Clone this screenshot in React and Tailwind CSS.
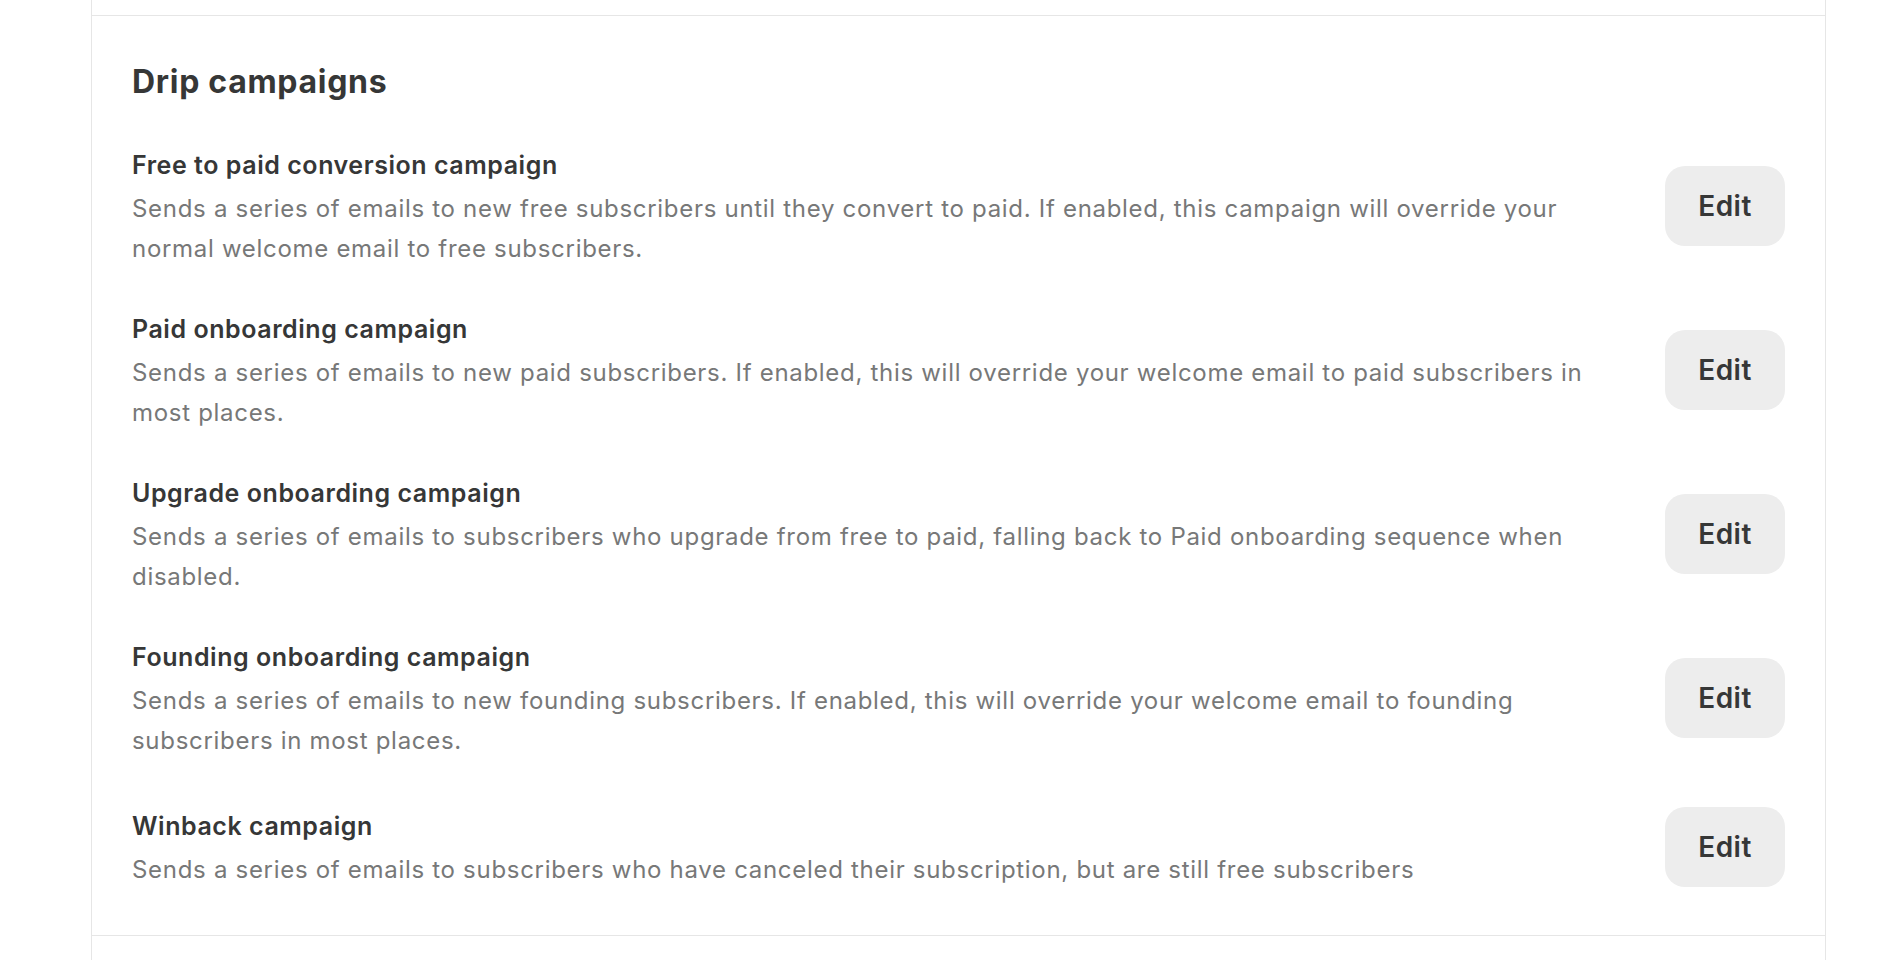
import React from 'react';

const campaigns = [
  {
    title: 'Free to paid conversion campaign',
    body: 'Sends a series of emails to new free subscribers until they convert to paid. If enabled, this campaign will override your normal welcome email to free subscribers.',
  },
  {
    title: 'Paid onboarding campaign',
    body: 'Sends a series of emails to new paid subscribers. If enabled, this will override your welcome email to paid subscribers in most places.',
  },
  {
    title: 'Upgrade onboarding campaign',
    body: 'Sends a series of emails to subscribers who upgrade from free to paid, falling back to Paid onboarding sequence when disabled.',
  },
  {
    title: 'Founding onboarding campaign',
    body: 'Sends a series of emails to new founding subscribers. If enabled, this will override your welcome email to founding subscribers in most places.',
  },
  {
    title: 'Winback campaign',
    body: 'Sends a series of emails to subscribers who have canceled their subscription, but are still free subscribers',
  },
];

function CampaignRow({ title, body, last }) {
  return (
    <div className={`flex items-center gap-[48px] ${last ? 'mt-[5px]' : ''}`}>
      <div className="flex-1 min-w-0">
        <h3 className="text-[25px] leading-[32px] font-semibold tracking-[0.55px] text-[#363737]">{title}</h3>
        <p className="mt-2 text-[24px] leading-[40px] tracking-[0.7px] text-[#777878]">{body}</p>
      </div>
      <button className="-mt-[7px] w-[120px] h-[80px] shrink-0 rounded-[20px] bg-[#ededed] text-[28px] font-semibold tracking-[0.5px] text-[#363737]">
        Edit
      </button>
    </div>
  );
}

export default function App() {
  return (
    <div className="min-h-screen bg-white font-['Inter','Liberation_Sans',sans-serif] antialiased">
      <div className="ml-[91px] w-[1735px] border-x border-[#e6e6e6]">
        {/* tail of the section above */}
        <div className="h-[15px]" />

        <section className="border-y border-[#e6e6e6] px-[40px] pt-[46px] pb-[45px]">
          <h2 className="text-[32px] leading-[40px] font-bold tracking-[0.7px] text-[#363737] mb-[47px]">Drip campaigns</h2>
          <div className="flex flex-col gap-[44px]">
            {campaigns.map((c, i) => (
              <CampaignRow key={c.title} {...c} last={i === campaigns.length - 1} />
            ))}
          </div>
        </section>

        <div className="h-[60px]" />
      </div>
    </div>
  );
}
